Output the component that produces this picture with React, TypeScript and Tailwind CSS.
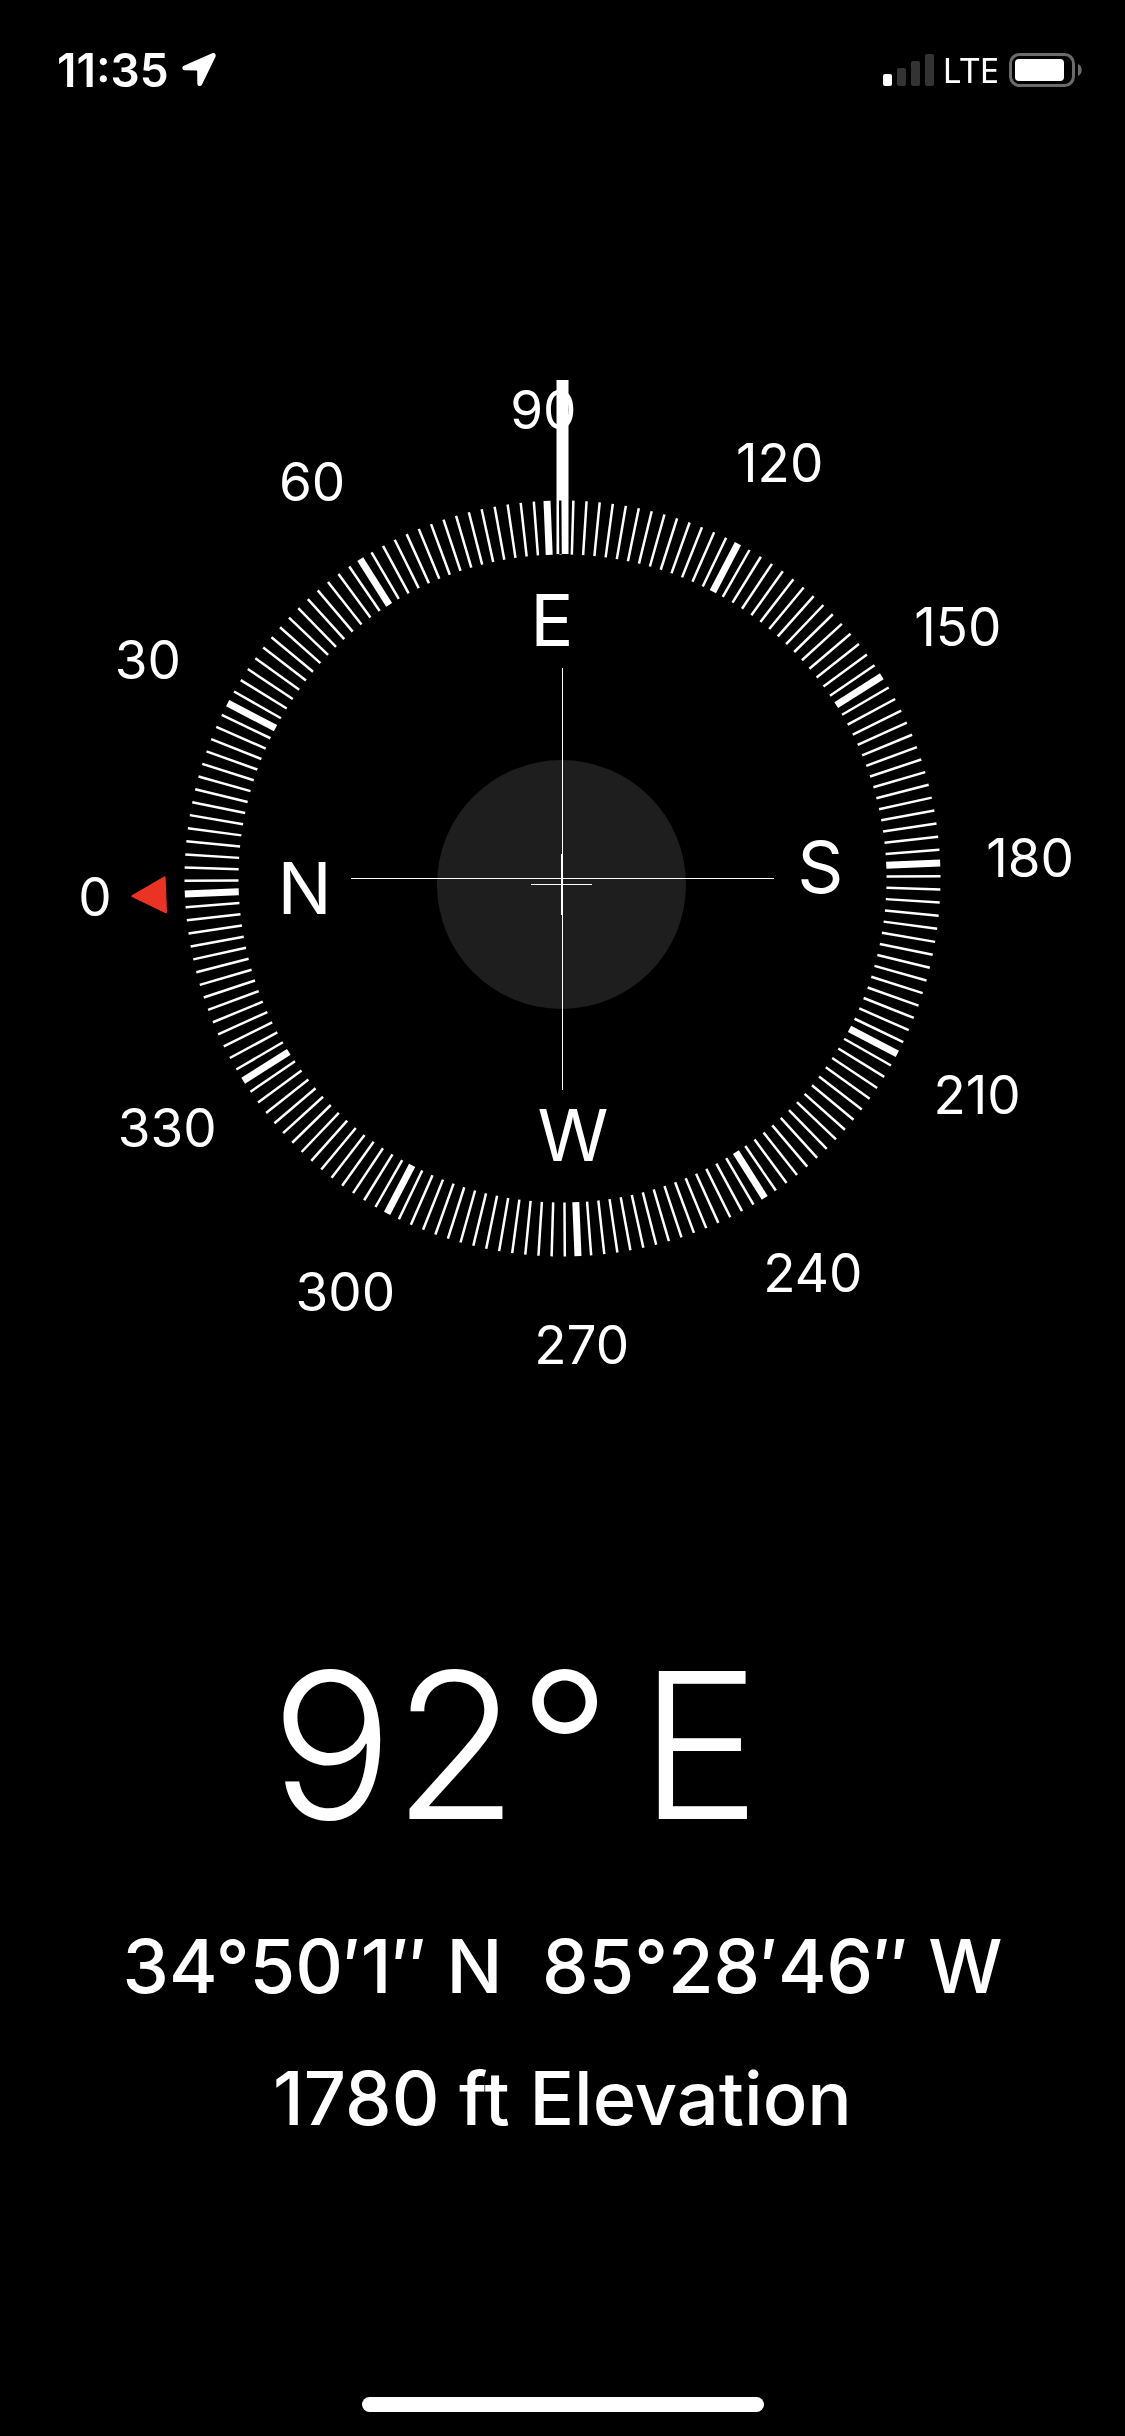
const CENTER = 562.5;
const HEADING = 92.35;
const OUTER = 378;
const INNER = 324;

const ticks = Array.from({ length: 180 }, (_, i) => i * 2);
const degrees = Array.from({ length: 12 }, (_, i) => i * 30);
const cardinals = [
  { label: "N", deg: 0 },
  { label: "E", deg: 90 },
  { label: "S", deg: 180 },
  { label: "W", deg: 270 },
];

// point on the dial for a bearing, with the current heading at the top
function polar(deg: number, radius: number) {
  const rad = ((deg - HEADING) * Math.PI) / 180;
  return {
    x: CENTER + radius * Math.sin(rad),
    y: CENTER - radius * Math.cos(rad),
  };
}

function StatusBar() {
  return (
    <header className="flex h-[140px] items-center justify-between pl-[57px] pr-[42px]">
      <div className="flex items-center gap-3">
        <span className="text-[46px] leading-[52px] font-semibold">11:35</span>
        <svg className="h-9 w-9" viewBox="0 0 36 36" fill="currentColor">
          <path d="M31.2 1.3 L2.8 13.8 C0.6 14.8 1 18.2 3.6 18.3 L15.6 18.4 C16 18.4 16.2 18.6 16.2 19 L16.3 31.4 C16.4 34.3 19.9 34.9 21 32.5 L34.4 5 C35.5 2.6 33.7 0.2 31.2 1.3 Z" />
        </svg>
      </div>
      <div className="flex items-center">
        <svg className="mr-2 h-8 w-[51px]" viewBox="0 0 51 32">
          <rect x="0" y="20" width="9" height="12" rx="2" fill="#fff" />
          <rect x="14" y="14" width="9" height="18" rx="2" fill="#333" />
          <rect x="28" y="7" width="9" height="25" rx="2" fill="#333" />
          <rect x="42" y="0" width="9" height="32" rx="2" fill="#333" />
        </svg>
        <span className="mr-[10px] font-['Noto_Sans',sans-serif] text-[35px] leading-10">LTE</span>
        <svg className="h-[34px] w-[74px]" viewBox="0 0 74 34">
          <rect x="1.5" y="1.5" width="63" height="31" rx="9" fill="none" stroke="#6b6b6b" strokeWidth="3" />
          <rect x="6" y="6" width="49" height="22" rx="4" fill="#fff" />
          <path d="M69 11 C74 13 74 21 69 23 Z" fill="#6b6b6b" />
        </svg>
      </div>
    </header>
  );
}

function Compass() {
  return (
    <svg className="block w-full" viewBox="0 0 1125 1125" role="img" aria-label="Compass">
      {/* Level */}
      <circle cx="561.5" cy="568.5" r="124.5" fill="#1e1e1e" />
      <g fill="#fff" shapeRendering="crispEdges">
        <rect x="531" y="568" width="61" height="1" />
        <rect x="561" y="538" width="1" height="61" />
        <rect x="351" y="562" width="423" height="1" />
        <rect x="562" y="352" width="1" height="422" />
      </g>

      {/* Dial */}
      {ticks.map((deg) => {
        const from = polar(deg, INNER);
        const to = polar(deg, OUTER);
        return (
          <line
            key={deg}
            x1={from.x}
            y1={from.y}
            x2={to.x}
            y2={to.y}
            stroke="#fff"
            strokeWidth={deg % 30 === 0 ? 7 : 2.5}
          />
        );
      })}

      {/* Heading needle, inverts the tick below it */}
      <rect className="mix-blend-difference" x="556.5" y="64" width="12" height="174" fill="#fff" />

      {degrees.map((deg) => {
        const { x, y } = polar(deg, 468);
        return (
          <text key={deg} x={x} y={y + 18} fontSize="53" textAnchor="middle" fill="#fff">
            {deg}
          </text>
        );
      })}

      {cardinals.map(({ label, deg }) => {
        const { x, y } = polar(deg, 258);
        return (
          <text key={label} x={x} y={y + 25} fontSize="72" textAnchor="middle" fill="#fff">
            {label}
          </text>
        );
      })}

      {/* North marker */}
      <path
        d="M562.5 132 L580 165 H545 Z"
        fill="#ea3323"
        stroke="#ea3323"
        strokeWidth="2"
        strokeLinejoin="round"
        transform={`rotate(${-HEADING} ${CENTER} ${CENTER})`}
      />
    </svg>
  );
}

export default function App() {
  return (
    <div className="flex min-h-screen flex-col overflow-hidden bg-black font-['Inter',sans-serif] text-white">
      <StatusBar />

      <main className="flex flex-col items-center">
        <div className="mt-[176px] w-full">
          <Compass />
        </div>

        <h1 className="mt-[180px] flex gap-7 pr-[94px] text-[204px] leading-[248px] font-light">
          <span>92°</span>
          <span>E</span>
        </h1>

        <p className="mt-[52px] text-[74px] leading-[90px] font-medium whitespace-pre">34°50′1″ N  85°28′46″ W</p>
        <p className="mt-[42px] text-[74px] leading-[90px] font-medium">1780 ft Elevation</p>
      </main>

      {/* Home indicator */}
      <div className="mx-auto mt-auto mb-6 h-[15px] w-[402px] rounded-full bg-white" />
    </div>
  );
}
